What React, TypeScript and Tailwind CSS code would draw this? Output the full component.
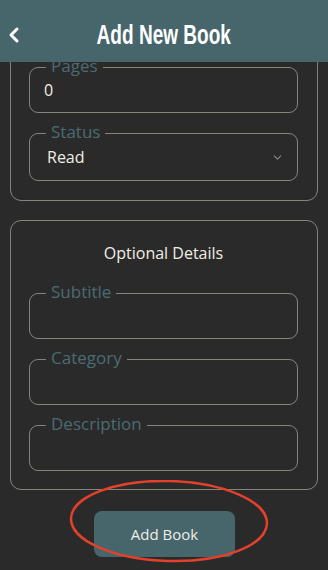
import React from 'react';
import { ChevronLeft, ChevronDown } from 'lucide-react';

const font = { fontFamily: '"Open Sans", "Noto Sans", sans-serif' };

type FieldProps = { label: string; value?: string; select?: boolean };

const Field: React.FC<FieldProps> = ({ label, value, select }) => (
  <div className={`relative ${select ? 'h-[48px]' : 'h-[46px]'} rounded-[9px] border border-[#85837c] flex items-center`}>
    <span className="absolute left-[16px] -top-[13px] px-[5px] bg-[#2a2a2a] text-[17px] leading-[22px] text-[#4b6c73]">
      {label}
    </span>
    {value !== undefined && (
      <span className={`${select ? 'pl-[17px]' : 'pl-[14px]'} text-[16px] font-medium text-[#f1eee5]`}>{value}</span>
    )}
    {select && <ChevronDown size={13} strokeWidth={2} className="ml-auto mr-[13px] text-[#8a8780]" />}
  </div>
);

export default function App() {
  const details = [
    { label: 'Title', value: '' },
    { label: 'Author', value: '' },
    { label: 'Pages', value: '0' },
  ];
  const optional = ['Subtitle', 'Category', 'Description'];

  return (
    <div className="w-[328px] h-[570px] bg-[#2a2a2a] flex flex-col overflow-hidden" style={font}>
      <header className="h-[62px] shrink-0 bg-[#46666c] flex items-center pt-[8px] relative z-10">
        <ChevronLeft size={24} strokeWidth={3} className="text-white ml-[2px]" />
        <div className="flex-1 flex justify-center pr-[26px]">
          <h1
            className="inline-block scale-x-[0.68] text-[28px] leading-[32px] font-bold text-white whitespace-nowrap"
            style={{ fontFamily: '"Liberation Sans", Arial, sans-serif' }}
          >
            Add New Book
          </h1>
        </div>
      </header>

      <main className="flex-1 overflow-hidden">
        <section className="-mt-[148px] mx-[10px] rounded-[11px] border border-[#85837c] pt-[20px] pb-[19px] pl-[18px] pr-[19px] flex flex-col gap-5">
          {details.map((d) => (
            <Field key={d.label} label={d.label} value={d.value} />
          ))}
          <Field label="Status" value="Read" select />
        </section>

        <section className="mt-[19px] mx-[10px] rounded-[11px] border border-[#85837c] pt-[22px] pb-[18px] pl-[18px] pr-[19px]">
          <h2 className="text-center text-[16px] leading-[20px] font-medium text-[#f1eee5]">Optional Details</h2>
          <div className="mt-[30px] flex flex-col gap-5">
            {optional.map((o) => (
              <Field key={o} label={o} />
            ))}
          </div>
        </section>

        <div className="relative mt-[21px] flex justify-center">
          <button className="w-[141px] h-[46px] rounded-[8px] bg-[#46666c] text-[15px] font-medium text-[#f1eee5] ml-[1px]">
            Add Book
          </button>
          <svg className="absolute left-[68px] -top-[31px] pointer-events-none" width="202" height="86" viewBox="0 0 202 86">
            <ellipse cx="101" cy="41" rx="98" ry="40" fill="none" stroke="#e3412b" strokeWidth="2.5" transform="rotate(1.5 101 41)" />
          </svg>
        </div>
      </main>
    </div>
  );
}
